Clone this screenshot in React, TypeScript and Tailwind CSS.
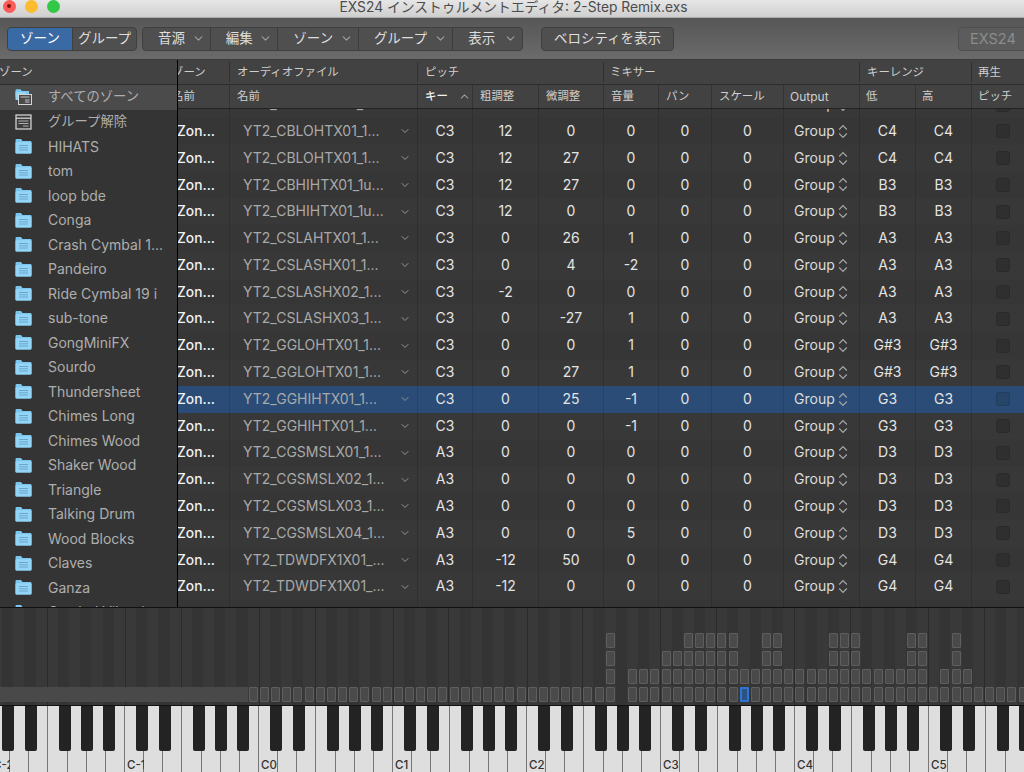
import { ChevronDown, ChevronUp } from 'lucide-react'

const groups = [
  'すべてのゾーン', 'グループ解除', 'HIHATS', 'tom', 'loop bde', 'Conga', 'Crash Cymbal 1...', 'Pandeiro',
  'Ride Cymbal 19 i', 'sub-tone', 'GongMiniFX', 'Sourdo', 'Thundersheet', 'Chimes Long', 'Chimes Wood',
  'Shaker Wood', 'Triangle', 'Talking Drum', 'Wood Blocks', 'Claves', 'Ganza', 'Cymbal Vibration',
]

// name, key, coarse, fine, volume, low/high
const zones: [string, string, string, string, string, string][] = [
  ['YT2_CBLOHTX01_1...', 'C3', '12', '0', '0', 'C4'],
  ['YT2_CBLOHTX01_1...', 'C3', '12', '0', '0', 'C4'],
  ['YT2_CBLOHTX01_1...', 'C3', '12', '27', '0', 'C4'],
  ['YT2_CBHIHTX01_1u...', 'C3', '12', '27', '0', 'B3'],
  ['YT2_CBHIHTX01_1u...', 'C3', '12', '0', '0', 'B3'],
  ['YT2_CSLAHTX01_1...', 'C3', '0', '26', '1', 'A3'],
  ['YT2_CSLASHX01_1...', 'C3', '0', '4', '-2', 'A3'],
  ['YT2_CSLASHX02_1...', 'C3', '-2', '0', '0', 'A3'],
  ['YT2_CSLASHX03_1...', 'C3', '0', '-27', '1', 'A3'],
  ['YT2_GGLOHTX01_1...', 'C3', '0', '0', '1', 'G#3'],
  ['YT2_GGLOHTX01_1...', 'C3', '0', '27', '1', 'G#3'],
  ['YT2_GGHIHTX01_1...', 'C3', '0', '25', '-1', 'G3'],
  ['YT2_GGHIHTX01_1...', 'C3', '0', '0', '-1', 'G3'],
  ['YT2_CGSMSLX01_1...', 'A3', '0', '0', '0', 'D3'],
  ['YT2_CGSMSLX02_1...', 'A3', '0', '0', '0', 'D3'],
  ['YT2_CGSMSLX03_1...', 'A3', '0', '0', '0', 'D3'],
  ['YT2_CGSMSLX04_1...', 'A3', '0', '0', '5', 'D3'],
  ['YT2_TDWDFX1X01_...', 'A3', '-12', '50', '0', 'G4'],
  ['YT2_TDWDFX1X01_...', 'A3', '-12', '0', '0', 'G4'],
  ['YT2_TDWDFX1X01_...', 'A3', '-12', '0', '0', 'G4'],
]

const columns = 'grid grid-cols-[51px_188px_55px_66px_65px_55px_53px_72px_76px_56px_56px_53px]'
const blackNotes = [1, 3, 6, 8, 10]
const blackKeys = ['left-[11px]', 'left-[34px]', 'left-[68px]', 'left-[90px]', 'left-[112px]']

// rows of the key map; numbers count notes up from the first one at x 562
const range = (a: number, b: number) => Array.from({ length: b - a + 1 }, (_, i) => a + i)
const mapRow1 = [4, ...range(11, 15), 18, 19, 24, 25, 26, 31, 32, 35]
const mapRow2 = [4, ...range(9, 15), 18, 19, 24, 25, 26, 31, 32, 35]
const mapRow3 = [4, ...range(6, 32), 34, 35, 36]

function Folder() {
  return (
    <svg width="17" height="16" viewBox="0 0 17 16" className="shrink-0">
      <path d="M0.5 2.2 Q0.5 1 1.7 1 H6 L7.5 3 H15.5 Q16.5 3 16.5 4 V14.5 Q16.5 15.5 15.5 15.5 H1.5 Q0.5 15.5 0.5 14.5 Z" fill="#7cc6ee" />
      <rect x="0.5" y="4.2" width="16" height="11.3" rx="1" fill="#93d5f7" />
      <path d="M4 7.5 H13 M4 9.8 H13 M4 12 H13" stroke="#6ba6c9" strokeWidth="1" />
    </svg>
  )
}

function AllZonesIcon() {
  return (
    <svg width="17" height="16" viewBox="0 0 17 16" className="shrink-0">
      <path d="M0.5 1.2 Q0.5 0.3 1.5 0.3 H5.5 L7 2 H14 V8 H0.5 Z" fill="#7cc6ee" />
      <rect x="0.5" y="3" width="10" height="8" fill="#93d5f7" />
      <rect x="3.5" y="5.5" width="13" height="10" fill="#4a4a4a" stroke="#d5d5d5" />
      <path d="M5.5 8 H14.5 M10 11 H14.5 M10 13 H14.5" stroke="#cfcfcf" strokeWidth="0.9" />
    </svg>
  )
}

function UngroupedIcon() {
  return (
    <svg width="17" height="16" viewBox="0 0 17 16" className="shrink-0">
      <rect x="1" y="1" width="15" height="14" fill="#3c3c3c" stroke="#dcdcdc" strokeWidth="1.2" />
      <path d="M1 4.2 H16" stroke="#dcdcdc" strokeWidth="1.2" />
      <path d="M3.5 7 H13.5 M3.5 9.5 H13.5 M8 12 H13.5" stroke="#bdbdbd" strokeWidth="0.9" />
    </svg>
  )
}

function UpDown() {
  return (
    <svg width="10" height="15" viewBox="0 0 10 15" className="shrink-0" fill="none" stroke="#a8a8a8" strokeWidth="1.1">
      <path d="M1.2 5.5 L5 1.5 L8.8 5.5" />
      <path d="M1.2 9.5 L5 13.5 L8.8 9.5" />
    </svg>
  )
}

function Sidebar() {
  return (
    <div className="w-[178px] shrink-0 border-r border-black bg-[#343434] overflow-hidden">
      <div className="h-[25px] bg-[#424242] border-b border-[#2c2c2c] text-[11.4px] leading-[24px] text-[#d0d0d0] -ml-px">ゾーン</div>
      {groups.map((g, i) => (
        <div key={g} className={`h-[24.5px] flex items-center pl-[15px] whitespace-nowrap overflow-hidden text-[#aeaeae] ${i < 2 ? 'text-[13.3px]' : 'text-[14px]'} ${i === 0 ? 'bg-[#4b4b4b]' : ''}`}>
          {i === 0 ? <AllZonesIcon /> : i === 1 ? <UngroupedIcon /> : <Folder />}
          <span className="ml-[16px]">{g}</span>
        </div>
      ))}
    </div>
  )
}

function ZoneTable() {
  return (
    <div className="flex-1 min-w-0 overflow-hidden flex flex-col bg-[#373737]">
      {/* group header */}
      <div className="flex h-[25px] shrink-0 bg-[#424242] border-b border-[#2c2c2c] text-[11.4px] text-[#cfcfcf]">
        <div className="w-[51px] overflow-hidden leading-[24px] whitespace-nowrap"><span className="-ml-[6px] inline-block">ゾーン</span></div>
        <div className="w-[188px] my-[2px] pl-[7px] leading-[20px] border-l border-[#303030]">オーディオファイル</div>
        <div className="w-[186px] my-[2px] pl-[7px] leading-[20px] border-l border-[#303030]">ピッチ</div>
        <div className="w-[256px] my-[2px] pl-[6px] leading-[20px] border-l border-[#303030]">ミキサー</div>
        <div className="w-[112px] my-[2px] pl-[7px] leading-[20px] border-l border-[#303030]">キーレンジ</div>
        <div className="w-[53px] my-[2px] pl-[6px] leading-[20px] border-l border-[#303030]">再生</div>
      </div>
      {/* column header */}
      <div className={`${columns} h-[24px] shrink-0 bg-[#424242] border-b border-[#222222] text-[11.4px] leading-[23px] text-[#cfcfcf]`}>
        <div className="overflow-hidden whitespace-nowrap"><span className="-ml-[6px] inline-block">名前</span></div>
        <div className="pl-[7px] border-l border-[#333333]">名前</div>
        <div className="pl-[7px] border-l border-[#333333] flex items-center whitespace-nowrap text-[#f0f0f0] font-medium">
          キー<ChevronUp size={13} className="ml-[10px] shrink-0 text-[#9c9c9c]" />
        </div>
        {['粗調整', '微調整', '音量', 'パン', 'スケール'].map(t => <div key={t} className="pl-[7px] border-l border-[#333333] whitespace-nowrap">{t}</div>)}
        <div className="pl-[6px] border-l border-[#333333] text-[12px]">Output</div>
        {['低', '高', 'ピッチ'].map(t => <div key={t} className="pl-[6px] border-l border-[#333333] whitespace-nowrap">{t}</div>)}
      </div>
      {/* rows */}
      <div className="flex-1 min-h-0 overflow-hidden">
        <div className="-mt-[17.9px]">
          {zones.map((z, i) => {
            const selected = i === 11
            const bg = selected ? 'bg-[#2a4c77]' : i % 2 ? 'bg-[#363636]' : 'bg-[#383838]'
            const line = selected ? 'border-[#264268]' : 'border-[#2f2f2f]'
            return (
              <div key={i} className={`${columns} ${bg} h-[26.8px] text-[14px] leading-[26.8px] text-[#e4e4e4] text-center`}>
                <div className="text-left -ml-px text-[13.8px] text-[#f2f2f2] font-medium">Zon...</div>
                <div className={`flex items-center justify-between pl-[13px] pr-[6px] border-l ${line} text-[#a9a9a9] whitespace-nowrap overflow-hidden`}>
                  <span>{z[0]}</span>
                  <ChevronDown size={12} className="text-[#969696] shrink-0" />
                </div>
                <div className={`border-l ${line}`}>{z[1]}</div>
                <div className={`border-l ${line}`}>{z[2]}</div>
                <div className={`border-l ${line}`}>{z[3]}</div>
                <div className={`border-l ${line}`}>{z[4]}</div>
                <div className={`border-l ${line}`}>0</div>
                <div className={`border-l ${line}`}>0</div>
                <div className={`border-l ${line} flex items-center pl-[10px] gap-[3px] text-[#dcdcdc]`}>Group<UpDown /></div>
                <div className={`border-l ${line}`}>{z[5]}</div>
                <div className={`border-l ${line}`}>{z[5]}</div>
                <div className={`border-l ${line} flex items-center justify-end pr-[14px]`}>
                  <div className={`w-[14px] h-[14px] rounded-[3px] border ${selected ? 'bg-[#274569] border-[#223c5c]' : 'bg-[#2f2f2f] border-[#2a2a2a]'}`} />
                </div>
              </div>
            )
          })}
        </div>
      </div>
    </div>
  )
}

function MapCell({ active }: { active?: boolean }) {
  return (
    <div className={`ml-[1.2px] w-[9px] h-[15px] rounded-[1px] ${active ? 'bg-[#2c5283] border-2 border-[#2f74d0]' : 'bg-[#4a4a4a] border border-[#5e5e5e]'}`} />
  )
}

function KeyMap() {
  return (
    <div className="h-[97px] shrink-0 flex overflow-hidden bg-[#333333] -ml-[9px] w-[1040px]">
      {Array.from({ length: 93 }, (_, j) => {
        const note = j % 12
        const i = j - 51
        const isBlack = blackNotes.includes(note)
        const divider = note === 0 || note === 5
        return (
          <div key={j} className={`w-[11.1667px] shrink-0 pt-[25px] ${isBlack ? 'bg-[#343434]' : 'bg-[#393939]'} ${divider ? 'shadow-[inset_1px_0_0_#2b2b2b]' : ''}`}>
            <div className="h-[15px] mb-[3px]">{mapRow1.includes(i) && <MapCell />}</div>
            <div className="h-[15px] mb-[3px]">{mapRow2.includes(i) && <MapCell />}</div>
            <div className="h-[15px] mb-[3px]">{mapRow3.includes(i) && <MapCell />}</div>
            <div className="h-[15px]">
              {j < 23 ? <div className="h-full bg-[#494949]" /> : i !== 5 && <MapCell active={i === 16} />}
            </div>
          </div>
        )
      })}
    </div>
  )
}

function Piano() {
  return (
    <div className="h-[67px] shrink-0 flex overflow-hidden border-t border-[#111111] -ml-[9px] w-[1080px] bg-[#dcdcdd]">
      {[-2, -1, 0, 1, 2, 3, 4, 5].map(oct => (
        <div key={oct} className="relative w-[134px] h-full shrink-0 grid grid-cols-7">
          {range(0, 6).map(k => (
            <div key={k} className="border-r border-[#777777] bg-[#dedede] min-w-0">
              {k === 0 && <span className="block pl-[2px] pt-[53px] text-[11.5px] leading-[13px] font-medium text-[#333333] whitespace-nowrap">C{oct}</span>}
            </div>
          ))}
          {blackKeys.map(left => (
            <div key={left} className={`absolute top-0 ${left} w-[12px] h-[45px] bg-[#232323] rounded-b-[2px]`} />
          ))}
        </div>
      ))}
    </div>
  )
}

function Menu({ label, width }: { label: string; width: string }) {
  return (
    <div className={`${width} h-full flex items-center justify-between pl-[15px] pr-[5px] border-r border-[#3c3c3c] last:border-r-0`}>
      <span>{label}</span>
      <ChevronDown size={13} className="text-[#a0a0a0]" />
    </div>
  )
}

export default function App() {
  return (
    <div className="w-[1024px] h-[772px] overflow-hidden flex flex-col bg-[#333333] font-['Inter','Noto_Sans_CJK_JP',sans-serif]">
      {/* title bar */}
      <div className="h-[18px] shrink-0 grid grid-cols-[1fr_auto_1fr] items-center bg-gradient-to-b from-[#e6e6e6] to-[#cfcfcf] border-b border-[#a8a8a8] overflow-hidden">
        <div className="flex gap-[9px] pl-[2.5px] -mt-[5px]">
          <div className="w-[13px] h-[13px] rounded-full bg-[#fc5b57] flex items-center justify-center"><div className="w-[4px] h-[4px] rounded-full bg-[#7a1310]" /></div>
          <div className="w-[13px] h-[13px] rounded-full bg-[#fdbb2e]" />
          <div className="w-[13px] h-[13px] rounded-full bg-[#33c748]" />
        </div>
        <div className="ml-[3px] text-[13.8px] leading-[14px] -mt-[4px] text-[#4c4c4c] whitespace-nowrap">EXS24 インストゥルメントエディタ: 2-Step Remix.exs</div>
        <div />
      </div>

      {/* toolbar */}
      <div className="h-[42px] shrink-0 flex items-center pl-[7px] bg-gradient-to-b from-[#565656] to-[#6b6b6b] border-b border-[#3a3a3a] text-[13.5px] text-[#dedede]">
        <div className="flex w-[130px] h-[24px] rounded-[4px] bg-[#4f4f4f] border border-[#3f3f3f] overflow-hidden">
          <div className="w-[64px] flex items-center justify-center bg-[#3a6aa4] text-white">ゾーン</div>
          <div className="flex-1 flex items-center justify-center border-l border-[#3f3f3f]">グループ</div>
        </div>
        <div className="ml-[5px] flex w-[381px] h-[24px] rounded-[4px] bg-[#4f4f4f] border border-[#3f3f3f]">
          <Menu label="音源" width="w-[68px]" />
          <Menu label="編集" width="w-[68px]" />
          <Menu label="ゾーン" width="w-[81px]" />
          <Menu label="グループ" width="w-[95px]" />
          <Menu label="表示" width="w-[69px]" />
        </div>
        <div className="ml-[18px] w-[133px] h-[24px] flex items-center justify-center rounded-[4px] bg-[#4f4f4f] border border-[#3f3f3f]">ベロシティを表示</div>
        <div className="ml-auto w-[70px] -mr-[4px] h-[24px] flex items-center pl-[11px] pt-px rounded-[4px] bg-[#5c5c5c] border border-[#4e4e4e] text-[14.5px] text-[#8c8c8c]">EXS24</div>
      </div>

      {/* zone list and table */}
      <div className="h-[548px] shrink-0 flex border-b border-[#111111]">
        <Sidebar />
        <ZoneTable />
      </div>

      <KeyMap />
      <Piano />
    </div>
  )
}
